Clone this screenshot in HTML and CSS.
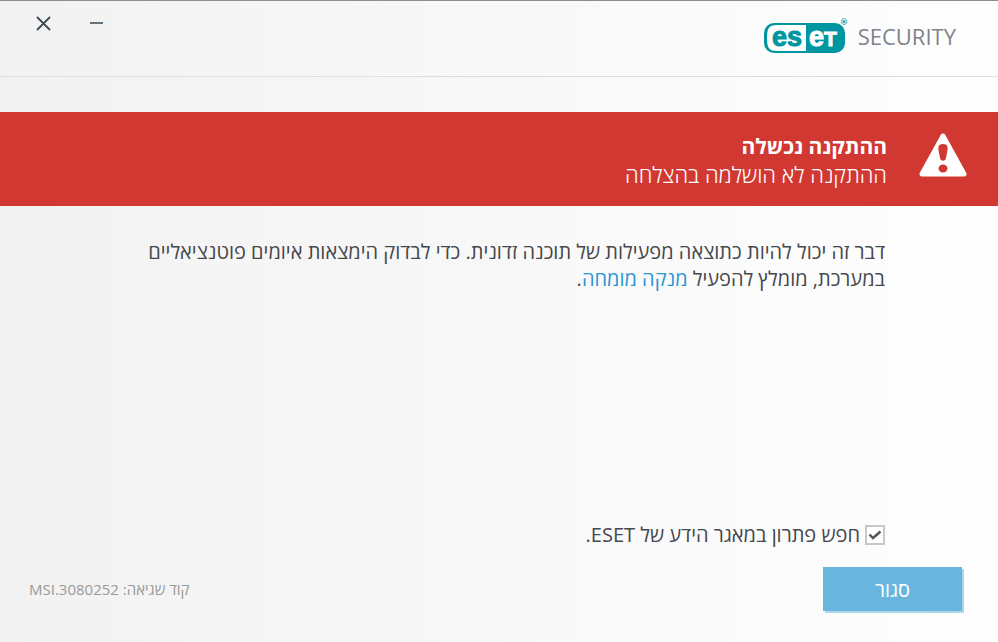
FILE: index.html
```html
<!DOCTYPE html>
<html lang="he" dir="rtl">
  <head>
    <meta charset="utf-8" />
    <title>ESET Security</title>
    <link rel="stylesheet" href="styles.css">
  </head>

  <body>
    <div class="window">
      <header class="header">
        <div class="brand">
          <svg class="logo" width="84" height="38" viewBox="0 0 84 38" direction="ltr" aria-label="ESET">
            <rect x="0" y="6" width="81" height="30" rx="10" fill="#0096a1" />
            <path d="M42 8H13C5 8 3 11 3 21S5 34 13 34H42Z" fill="#fff" />
            <text class="logo-text" x="8" y="29" fill="#0096a1" stroke="#0096a1">es</text>
            <text class="logo-text" x="45" y="29" fill="#fff" stroke="#fff">e<tspan class="logo-cap">T</tspan></text>
            <text class="logo-mark" x="76" y="8" fill="#0096a1">®</text>
          </svg>
          <span class="product">SECURITY</span>
        </div>
        <div class="controls">
          <button class="control" type="button" aria-label="מזער">
            <svg width="15" height="15" viewBox="0 0 15 15"><path d="M1 7H14" stroke="#66757d" stroke-width="2" /></svg>
          </button>
          <button class="control" type="button" aria-label="סגור חלון">
            <svg width="15" height="15" viewBox="0 0 15 15"><path d="M1 1L14 14M14 1L1 14" stroke="#3c4b55" stroke-width="1.8" /></svg>
          </button>
        </div>
      </header>

      <section class="banner">
        <svg class="warning" width="48" height="46" viewBox="0 0 48 46">
          <path d="M24 4L45 42H3Z" fill="#fff" stroke="#fff" stroke-width="5" stroke-linejoin="round" />
          <path d="M24 12C19.500 12 19 15 19.500 18L21 26C21.500 29.500 26.500 29.500 27 26L28.500 18C29 15 28.500 12 24 12Z" fill="#d13831" />
          <ellipse cx="24" cy="36.500" rx="4.500" ry="4" fill="#d13831" />
        </svg>
        <div>
          <h1 class="title">ההתקנה נכשלה</h1>
          <p class="subtitle">ההתקנה לא הושלמה בהצלחה</p>
        </div>
      </section>

      <main class="content">
        <p class="message">דבר זה יכול להיות כתוצאה מפעילות של תוכנה זדונית. כדי לבדוק הימצאות איומים פוטנציאליים במערכת, מומלץ להפעיל <a class="link" href="#">מנקה מומחה</a>.</p>
        <label class="option" for="search">
          <input class="checkbox" type="checkbox" id="search" checked />
          <span>חפש פתרון במאגר הידע של ESET.</span>
        </label>
      </main>

      <footer class="footer">
        <button class="close" type="button">סגור</button>
        <span class="code">קוד שגיאה: MSI.3080252</span>
      </footer>
    </div>
  </body>
</html>
```

FILE: styles.css
```css
* {
  box-sizing: border-box;
  margin: 0;
  padding: 0;
}
body {
  font-family: "Open Sans", "Noto Sans", sans-serif;
  color: #45484c;
}
.window {
  display: flex;
  flex-direction: column;
  min-height: 100vh;
  border-top: 1px solid #8f8d8f;
  background: linear-gradient(to right, #f2f2f2, #fefefe);
}
.header {
  display: flex;
  justify-content: space-between;
  align-items: flex-start;
  height: 76px;
  padding: 15px 42px 0 36px;
  border-bottom: 1px solid #dedede;
}
.brand {
  display: flex;
  align-items: center;
  gap: 10px;
  direction: ltr;
}
.logo-text {
  font: bold 27px "Liberation Sans", sans-serif;
  stroke-width: 1px;
}
.logo-cap {
  font-size: 21px;
}
.logo-mark {
  font: bold 8px "DejaVu Sans", sans-serif;
}
.product {
  font: 22px/40px "Open Sans", sans-serif;
  color: #7d848a;
}
.controls {
  display: flex;
  gap: 38px;
}
.control {
  height: 15px;
  border: 0;
  background: none;
  cursor: pointer;
}
.control svg {
  display: block;
}
.banner {
  display: flex;
  align-items: center;
  gap: 32px;
  margin-top: 35px;
  padding: 20px 31px 18px;
  background-color: #d13831;
  color: #fff;
}
.warning {
  margin-bottom: 10px;
}
.title {
  font-size: 21px;
  line-height: 28px;
}
.subtitle {
  font-size: 22px;
  font-weight: 300;
  line-height: 28px;
}
.content {
  display: flex;
  flex: 1;
  flex-direction: column;
  justify-content: space-between;
  align-items: flex-start;
  padding: 32px 113px 18px;
}
.message {
  font-size: 20px;
  line-height: 27px;
}
.link {
  color: #2b95d3;
  text-decoration: none;
}
.option {
  display: flex;
  align-items: center;
  gap: 5px;
  font-size: 20px;
  line-height: 28px;
}
.checkbox {
  width: 20px;
  height: 20px;
  appearance: none;
  border: 2px solid #c8c8c8;
  background: #fff url("data:image/svg+xml,%3Csvg xmlns='http://www.w3.org/2000/svg' viewBox='0 0 16 16'%3E%3Cpath d='M2.500 7.500L6 11L13.500 4.500' fill='none' stroke='%23555' stroke-width='2.400'/%3E%3C/svg%3E") center / 16px no-repeat;
}
.footer {
  display: flex;
  justify-content: space-between;
  align-items: center;
  padding: 0 36px 31px 29px;
}
.close {
  width: 139px;
  height: 44px;
  border: 0;
  background-color: #68b5de;
  box-shadow: 2px 2px #aed5eb;
  color: #fff;
  font: 20px "Open Sans", "Noto Sans", sans-serif;
  cursor: pointer;
}
.code {
  font-size: 15px;
  color: #999;
}
```
